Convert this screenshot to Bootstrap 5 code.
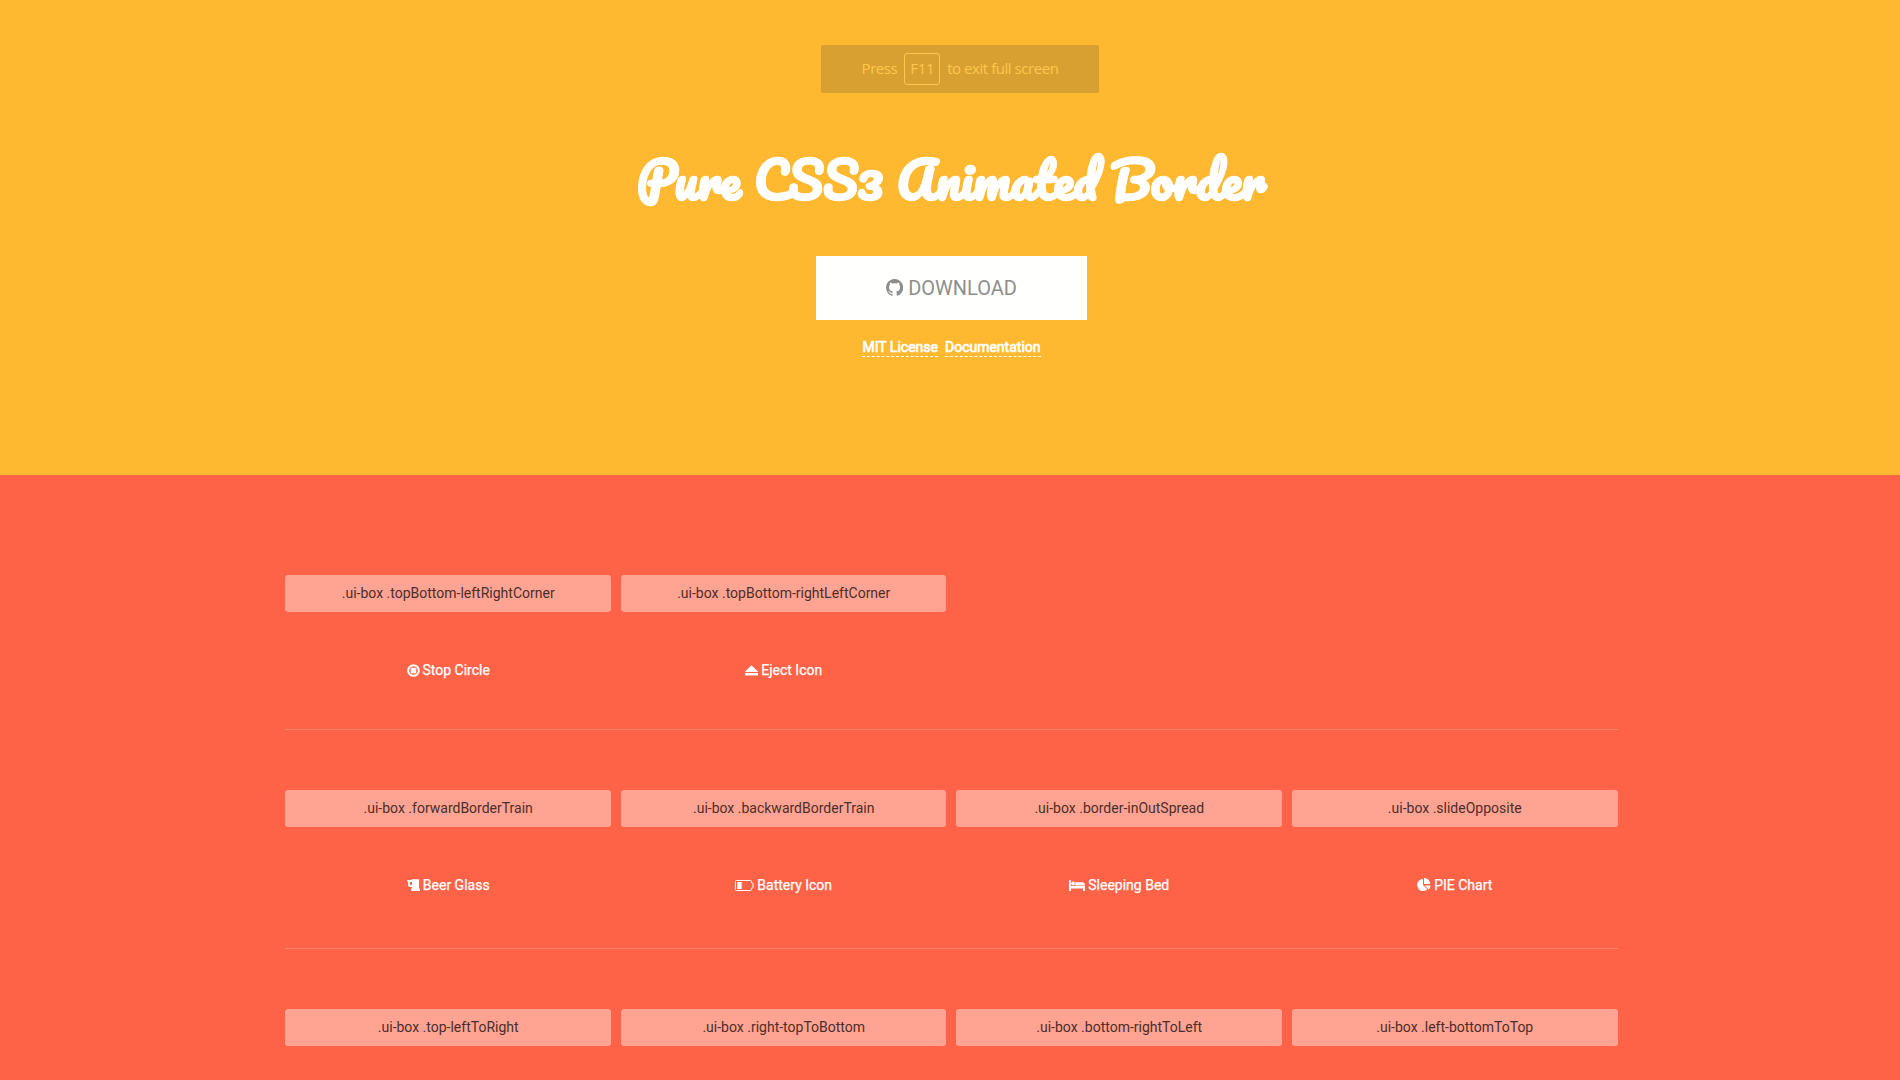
<!DOCTYPE html>
<html lang="en">
<head>
<meta charset="utf-8">
<meta name="viewport" content="width=device-width, initial-scale=1">
<title>Pure CSS3 Animated Border</title>
<link href="https://cdn.jsdelivr.net/npm/bootstrap@5.3.0/dist/css/bootstrap.min.css" rel="stylesheet">
<style>
body{font-family:Roboto,sans-serif;font-size:14px;line-height:20px;background:#ff6347;height:1080px;overflow:hidden}
.page-wrap{width:1903px;height:1080px;overflow:hidden}
.hero{background:#ffb930;height:475px;padding-top:139px}
.hero-title{font-family:Pacifico,Lato,cursive;font-weight:700;font-size:50px;line-height:80px;height:117px;margin:0;color:#fff;-webkit-text-stroke:.8px #fff;white-space:nowrap}
.btn-download{width:271px;height:64px;border-radius:0;background:#fffffe;color:#8e8e8e;font-size:20px;gap:5px}
.hero-links{margin-top:18px;gap:7px}
.hero-links a{color:#fff;-webkit-text-stroke:.7px #fff;line-height:19px;height:19px;border-bottom:1px dashed #fff}
.fs-hint{top:45px;left:821px;width:278px;height:48px;border-radius:2px;background:#d8a030;color:#ffc64f;font-family:"Open Sans","Noto Sans",sans-serif;font-size:15px;gap:7px}
.fs-hint span{letter-spacing:-.45px;padding-bottom:2px}
.fs-hint b{font-weight:400;letter-spacing:-.3px;border:1px solid #ffc64f;border-radius:3px;width:36px;height:32px;line-height:29px}
.demo{width:70%;padding-top:100px}
.demo-row{--bs-gutter-x:10px;height:154px}
.demo-row + hr + .demo-row{height:158px}
.demo hr{margin:0 0 60px;border:0;border-top:1px solid #ff836c;opacity:1}
.tag{height:37px;line-height:37px;border-radius:3px;background:#ffa393;color:#4c2e29}
.effect{margin-top:48px;gap:3px;color:#fff}
.effect span{-webkit-text-stroke:.25px #fff}
svg{fill:currentColor;flex:none;display:block}
</style>
</head>
<body>
<div class="page-wrap">
<header class="hero text-center">
  <h1 class="hero-title">Pure CSS3 Animated Border</h1>
  <a class="btn-download d-flex align-items-center justify-content-center mx-auto text-decoration-none" href="#"><svg width="17.2" height="17.2" viewBox="128 128 1536 1536"><path d="M896 128q209 0 385.500 103t279.500 279.500 103 385.500q0 251-146.500 451.500t-378.500 277.500q-27 5-40-7t-13-30q0-3 .5-76.500t.5-134.500q0-97-52-142 57-6 102.500-18t94-39 81-66.500 53-105 20.500-150.500q0-119-79-206 37-91-8-204-28-9-81 11t-92 44l-38 24q-93-26-192-26t-192 26q-16-11-42.500-27t-83.500-38.500-85-13.500q-45 113-8 204-79 87-79 206 0 85 20.500 150t52.500 105 80.500 67 94 39 102.500 18q-39 36-49 103-21 10-45 15t-57 5-65.500-21.500-55.500-62.500q-19-32-48.500-52t-49.500-24l-20-3q-21 0-29 4.500t-5 11.500 9 14 13 12l7 5q22 10 43.500 38t31.500 51l10 23q13 38 44 61.500t67 30 69.500 7 55.500-3.500l23-4q0 38 .5 88.500t.5 54.500q0 18-13 30t-40 7q-232-77-378.500-277.500t-146.500-451.500q0-209 103-385.500t279.500-279.500 385.500-103z"/></svg><span>DOWNLOAD</span></a>
  <nav class="hero-links d-flex justify-content-center"><a class="text-decoration-none" href="#">MIT License</a><a class="text-decoration-none" href="#">Documentation</a></nav>
</header>
<main class="demo mx-auto text-center">
  <div class="row demo-row">
    <div class="col-3"><div class="tag">.ui-box .topBottom-leftRightCorner</div><div class="effect d-flex align-items-center justify-content-center"><svg width="13" height="13" viewBox="0 0 13 13"><path fill-rule="evenodd" d="M6.500.2a6.300 6.300 0 1 0 0 12.600a6.300 6.300 0 0 0 0-12.600zM6.500 2.200a4.300 4.300 0 1 1 0 8.600a4.300 4.300 0 0 1 0-8.600z"/><rect x="3.800" y="3.800" width="5.400" height="5.400" rx=".5"/></svg><span>Stop Circle</span></div></div>
    <div class="col-3"><div class="tag">.ui-box .topBottom-rightLeftCorner</div><div class="effect d-flex align-items-center justify-content-center"><svg width="13" height="11" viewBox="0 0 13 11"><path d="M.2 6.300L6.500.2l6.300 6.100q.2.700-.5.700H.7q-.7 0-.5-.7zM.6 8h11.800q.6 0 .6.600v1.400q0 .6-.6.600H.6q-.6 0-.6-.6V8.600Q0 8 .6 8z"/></svg><span>Eject Icon</span></div></div>
  </div>
  <hr>
  <div class="row demo-row">
    <div class="col-3"><div class="tag">.ui-box .forwardBorderTrain</div><div class="effect d-flex align-items-center justify-content-center"><svg width="13" height="12" viewBox="0 0 13 12"><path fill-rule="evenodd" d="M0 1.500L.6 1h3.600L5 .2h6.800l.6.800-.4.700V9l1 1.200V12H4V10.200L5 9V8H3.200Q1 8 1 5.500V3zM3 3v2.300q0 .8.800.8H5V3z"/></svg><span>Beer Glass</span></div></div>
    <div class="col-3"><div class="tag">.ui-box .backwardBorderTrain</div><div class="effect d-flex align-items-center justify-content-center"><svg width="19" height="11" viewBox="0 0 19 11"><path d="M1.500.5h14q1 0 1 1v1.300h.5q1 0 1 1v3.400q0 1-1 1h-.5v1.300q0 1-1 1h-14q-1 0-1-1v-8q0-1 1-1z" fill="none" stroke="currentColor"/><path d="M2.200 2h4.500v7H2.200z"/></svg><span>Battery Icon</span></div></div>
    <div class="col-3"><div class="tag">.ui-box .border-inOutSpread</div><div class="effect d-flex align-items-center justify-content-center"><svg width="16" height="11" viewBox="0 0 16 11"><path d="M0 .5Q0 0 .5 0h.9q.5 0 .5.500V6H16v4.500q0 .5-.5.500h-1q-.5 0-.5-.5V8.400H2v2.100q0 .5-.5.500h-1Q0 11 0 10.500zM6.300 5.500V2.300L13.300 2.200Q16 2.500 16 5.500z"/><circle cx="4.100" cy="3.500" r="1.900"/></svg><span>Sleeping Bed</span></div></div>
    <div class="col-3"><div class="tag">.ui-box .slideOpposite</div><div class="effect d-flex align-items-center justify-content-center"><svg width="14" height="14" viewBox="0 0 14 14"><path d="M6 7l4.300 4.300A6 6 0 1 1 6 1zM7.700 7.500H13.500Q13.400 9.800 11.700 11.500zM7 6V0a6 6 0 0 1 6.200 6z"/></svg><span>PIE Chart</span></div></div>
  </div>
  <hr>
  <div class="row demo-row">
    <div class="col-3"><div class="tag">.ui-box .top-leftToRight</div></div>
    <div class="col-3"><div class="tag">.ui-box .right-topToBottom</div></div>
    <div class="col-3"><div class="tag">.ui-box .bottom-rightToLeft</div></div>
    <div class="col-3"><div class="tag">.ui-box .left-bottomToTop</div></div>
  </div>
</main>
</div>
<div class="fs-hint position-absolute d-flex align-items-center justify-content-center text-center"><span>Press</span><b>F11</b><span>to exit full screen</span></div>
<script src="https://cdn.jsdelivr.net/npm/bootstrap@5.3.0/dist/js/bootstrap.bundle.min.js"></script>
</body>
</html>
